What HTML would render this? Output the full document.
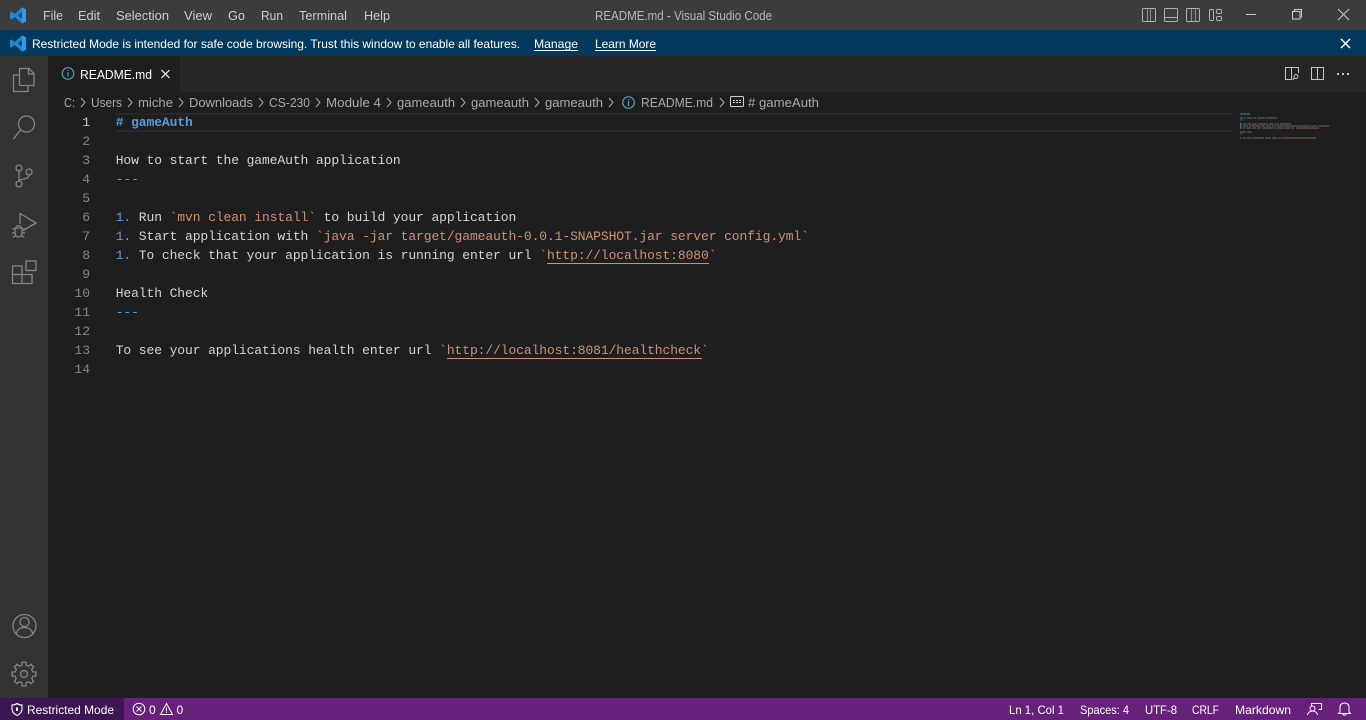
<!DOCTYPE html>
<html><head><meta charset="utf-8"><title>README.md - Visual Studio Code</title>
<style>
html,body{margin:0;padding:0;width:1366px;height:720px;overflow:hidden;background:#1e1e1e}
svg{display:block}
text{font-family:"Liberation Sans",sans-serif;font-size:13px;white-space:pre}
.m{fill:#cccccc}
.c{font-family:"Liberation Mono",monospace;font-size:13px;letter-spacing:-0.1px;fill:#d4d4d4}
.b{fill:#569cd6}.l{fill:#6796e6}.o{fill:#ce9178}
.n{font-family:"Liberation Mono",monospace;font-size:13px;fill:#858585;text-anchor:end}
.bc{fill:#a9a9a9}
.s{fill:#fff;font-size:12px}
.ic{fill:none;stroke:#858585;stroke-width:1.3}
.chev{fill:none;stroke:#a9a9a9;stroke-width:1}
.mm{fill:none;stroke-width:1.3;stroke:#5a5a5a}
.mo{fill:none;stroke-width:1.3;stroke:#6e5045}
</style></head><body>
<svg width="1366" height="720" viewBox="0 0 1366 720" xmlns="http://www.w3.org/2000/svg">
<defs>
<symbol id="logo" viewBox="0 0 100 100">
<path fill="#2387d0" fill-rule="evenodd" d="M97 14L73 2 31 41 12 26 3 31V69L12 74 31 59 73 98 97 86ZM73 30L50 50 73 70Z"/>
<path fill="#2f9bea" d="M73 2L97 14V86L73 98Z"/>
</symbol>
<g id="chv"><path class="chev" d="M0 0l4 4.500-4 4.500"/></g>
<path id="gt" d="M8.310-3.440L8.730-2.180 11.850-1.880V1.880L8.730 2.180 8.310 3.440"/>
</defs>

<rect width="1366" height="720" fill="#1e1e1e"/>
<!-- title bar -->
<rect width="1366" height="30" fill="#3c3c3c"/>
<use href="#logo" x="9.500" y="7" width="17" height="17"/>
<text class="m" x="43" y="20" textLength="20" lengthAdjust="spacingAndGlyphs">File</text>
<text class="m" x="78" y="20" textLength="22" lengthAdjust="spacingAndGlyphs">Edit</text>
<text class="m" x="116" y="20" textLength="53" lengthAdjust="spacingAndGlyphs">Selection</text>
<text class="m" x="184" y="20" textLength="28" lengthAdjust="spacingAndGlyphs">View</text>
<text class="m" x="228" y="20" textLength="17" lengthAdjust="spacingAndGlyphs">Go</text>
<text class="m" x="261" y="20" textLength="22" lengthAdjust="spacingAndGlyphs">Run</text>
<text class="m" x="299" y="20" textLength="48" lengthAdjust="spacingAndGlyphs">Terminal</text>
<text class="m" x="364" y="20" textLength="26" lengthAdjust="spacingAndGlyphs">Help</text>
<text x="595" y="20" fill="#b8b8b8" textLength="177" lengthAdjust="spacingAndGlyphs">README.md - Visual Studio Code</text>

<g fill="none" stroke="#b0b0b0">
<rect x="1142.500" y="8.500" width="13" height="13" rx="1"/><path d="M1147.500 8.500v13M1150.500 8.500v13" opacity=".7"/>
<rect x="1164.500" y="8.500" width="13" height="13" rx="1"/><path d="M1164.500 17.500h13"/>
<rect x="1186.500" y="8.500" width="13" height="13" rx="1"/><path d="M1191.500 8.500v13M1195.500 8.500v13" opacity=".7"/>
<rect x="1209.500" y="9.500" width="4" height="11" rx="1"/><rect x="1216.500" y="9.500" width="5" height="4" rx="1"/><rect x="1216.500" y="16.500" width="5" height="4" rx="1"/>
</g>
<path d="M1246 14.500h10" stroke="#cccccc" fill="none"/>
<path d="M1292.500 11.500h7.500v7.500h-7.500zM1294.500 11.500v-2h7v7.500h-2" stroke="#cccccc" fill="none"/>
<path d="M1338 9l11 11M1349 9l-11 11" stroke="#cccccc" fill="none"/>

<!-- banner -->
<rect y="30" width="1366" height="26" fill="#04395e"/>
<use href="#logo" x="9.500" y="35" width="17" height="17"/>
<text x="32" y="48" fill="#fff" style="font-size:12px" textLength="488" lengthAdjust="spacingAndGlyphs">Restricted Mode is intended for safe code browsing. Trust this window to enable all features.</text>
<text x="534" y="48" fill="#fff" style="font-size:12px" textLength="44" lengthAdjust="spacingAndGlyphs">Manage</text>
<rect x="534" y="50" width="44" height="1" fill="#fff"/>
<text x="595" y="48" fill="#fff" style="font-size:12px" textLength="61" lengthAdjust="spacingAndGlyphs">Learn More</text>
<rect x="595" y="50" width="61" height="1" fill="#fff"/>
<path d="M1341 39l9 9M1350 39l-9 9" stroke="#fff" stroke-width="1.500" fill="none"/>

<!-- activity bar -->
<rect y="56" width="48" height="642" fill="#333333"/>
<g class="ic">
<path d="M19.500 68.500h9.500l5 5v12h-14.500zM28.500 68.500v5.500h5.500"/>
<path d="M19.500 75h-6v16.500h14.500v-6"/>
<circle cx="26.500" cy="124" r="8"/><path d="M20.500 130L13.500 139"/>
<circle cx="19" cy="168" r="3"/><circle cx="19" cy="184" r="3"/><circle cx="29" cy="172" r="3"/>
<path d="M19 171v10M29 175c0 4-6 4-10 5"/>
<path d="M20 224v-10.500l16 9.500-13 7.500"/>
<path d="M15 228h7v4c0 3-1.300 5-3.500 5s-3.500-2-3.500-5zM16 228c0-3 5-3 5 0M15 230l-2.500-1.500M22 230l2.500-1.500M15 233h-3M22 233h3M15.500 235.500l-2.500 2M21.500 235.500l2.500 2"/>
<path d="M12.500 266h9.500v17.500h-9.500zM12.500 274.500h19.500v9h-10"/>
<rect x="26" y="261" width="10" height="9.500"/>
<circle cx="24.500" cy="626" r="11.500"/><circle cx="24.500" cy="622" r="4.500"/><path d="M16 634.500c1-4.500 4-7 8.500-7s7.500 2.500 8.500 7"/>
<circle cx="24" cy="674" r="3.500"/>
<g transform="translate(24 674)">
<use href="#gt"/><use href="#gt" transform="rotate(45)"/><use href="#gt" transform="rotate(90)"/><use href="#gt" transform="rotate(135)"/><use href="#gt" transform="rotate(180)"/><use href="#gt" transform="rotate(225)"/><use href="#gt" transform="rotate(270)"/><use href="#gt" transform="rotate(315)"/>
</g>
</g>

<!-- tab bar -->
<rect x="48" y="56" width="1318" height="36" fill="#252526"/>
<rect x="48" y="56" width="132" height="36" fill="#1e1e1e"/>
<circle cx="68" cy="73.500" r="5.800" fill="none" stroke="#519aba" stroke-width="1.200"/>
<path d="M68 72v4.500M68 70v1" stroke="#519aba" stroke-width="1.200" fill="none"/>
<text x="80" y="79" fill="#ffffff" textLength="72" lengthAdjust="spacingAndGlyphs">README.md</text>
<path d="M161.500 70l8 8M169.500 70l-8 8" stroke="#e0e0e0" stroke-width="1.300" fill="none"/>
<g fill="none" stroke="#c5c5c5">
<path d="M1298.500 73v-5.500h-13v12h6M1291.500 67.500v12"/><circle cx="1296" cy="76.500" r="2"/><path d="M1294.500 78l-2 2"/>
<rect x="1311.500" y="67.500" width="12" height="12"/><path d="M1317.500 67.500v12"/>
</g>
<g fill="#c5c5c5"><rect x="1337" y="73" width="2" height="2"/><rect x="1342" y="73" width="2" height="2"/><rect x="1347" y="73" width="2" height="2"/></g>

<!-- breadcrumbs -->
<rect x="48" y="92" width="1318" height="21" fill="#1e1e1e"/>
<text class="bc" x="64" y="107" textLength="11" lengthAdjust="spacingAndGlyphs">C:</text>
<text class="bc" x="91" y="107" textLength="31" lengthAdjust="spacingAndGlyphs">Users</text>
<text class="bc" x="138" y="107" textLength="35" lengthAdjust="spacingAndGlyphs">miche</text>
<text class="bc" x="189" y="107" textLength="64" lengthAdjust="spacingAndGlyphs">Downloads</text>
<text class="bc" x="269" y="107" textLength="41" lengthAdjust="spacingAndGlyphs">CS-230</text>
<text class="bc" x="326" y="107" textLength="55" lengthAdjust="spacingAndGlyphs">Module 4</text>
<text class="bc" x="397" y="107" textLength="58" lengthAdjust="spacingAndGlyphs">gameauth</text>
<text class="bc" x="471" y="107" textLength="58" lengthAdjust="spacingAndGlyphs">gameauth</text>
<text class="bc" x="545" y="107" textLength="58" lengthAdjust="spacingAndGlyphs">gameauth</text>
<text class="bc" x="641" y="107" textLength="72" lengthAdjust="spacingAndGlyphs">README.md</text>
<text class="bc" x="748" y="107" textLength="71" lengthAdjust="spacingAndGlyphs"># gameAuth</text>
<use href="#chv" x="81" y="98"/><use href="#chv" x="128" y="98"/><use href="#chv" x="179" y="98"/><use href="#chv" x="259" y="98"/><use href="#chv" x="316" y="98"/><use href="#chv" x="387" y="98"/><use href="#chv" x="461" y="98"/><use href="#chv" x="535" y="98"/><use href="#chv" x="609" y="98"/><use href="#chv" x="720" y="98"/>
<circle cx="628.500" cy="102.500" r="5.800" fill="none" stroke="#519aba" stroke-width="1.200"/>
<path d="M628.500 101v5M628.500 99v1" stroke="#519aba" stroke-width="1.200" fill="none"/>
<rect x="730.500" y="96.500" width="13" height="10" fill="none" stroke="#cccccc" rx="1"/>
<path d="M733 102.500h8M733 100.500h8" stroke="#cccccc" stroke-dasharray="2 1" fill="none"/>

<!-- current line -->
<rect x="116" y="113" width="1116" height="2" fill="#282828"/>
<rect x="116" y="130" width="1116" height="2" fill="#282828"/>

<!-- line numbers -->
<text class="n" x="90" y="126" style="fill:#c6c6c6">1</text>
<text class="n" x="90" y="145">2</text>
<text class="n" x="90" y="164">3</text>
<text class="n" x="90" y="183">4</text>
<text class="n" x="90" y="202">5</text>
<text class="n" x="90" y="221">6</text>
<text class="n" x="90" y="240">7</text>
<text class="n" x="90" y="259">8</text>
<text class="n" x="90" y="278">9</text>
<text class="n" x="90" y="297">10</text>
<text class="n" x="90" y="316">11</text>
<text class="n" x="90" y="335">12</text>
<text class="n" x="90" y="354">13</text>
<text class="n" x="90" y="373">14</text>

<!-- code -->
<text class="c b" x="115.700" y="126" style="font-weight:bold"># gameAuth</text>
<text class="c" x="115.700" y="164">How to start the gameAuth application</text>
<text class="c b" x="115.700" y="183">---</text>
<text class="c" x="115.700" y="221"><tspan class="l">1.</tspan> Run <tspan class="o">`mvn clean install`</tspan> to build your application</text>
<text class="c" x="115.700" y="240"><tspan class="l">1.</tspan> Start application with <tspan class="o">`java -jar target/gameauth-0.0.1-SNAPSHOT.jar server config.yml`</tspan></text>
<text class="c" x="115.700" y="259"><tspan class="l">1.</tspan> To check that your application is running enter url <tspan class="o">`http://localhost:8080`</tspan></text>
<rect x="547" y="263" width="162" height="1" fill="#ce9178"/>
<text class="c" x="115.700" y="297">Health Check</text>
<text class="c b" x="115.700" y="316">---</text>
<text class="c" x="115.700" y="354">To see your applications health enter url <tspan class="o">`http://localhost:8081/healthcheck`</tspan></text>
<rect x="447" y="358" width="255" height="1" fill="#ce9178"/>

<!-- minimap -->
<path d="M1240 114h10" fill="none" stroke="#3f6a90" stroke-width="1.300"/>
<path class="mm" d="M1240 118h3m1 0h2m1 0h5m1 0h3m1 0h8m1 0h11"/>
<path d="M1240 120h3M1240 134h3" fill="none" stroke="#34506a"/>
<rect x="1240" y="123" width="1.500" height="6" fill="#3f6a90"/>
<path class="mm" d="M1243 124h3m20 0h2m1 0h5m1 0h4m1 0h11"/>
<path class="mo" d="M1247 124h4m1 0h5m1 0h8"/>
<path class="mm" d="M1243 126h5m1 0h11m1 0h4"/>
<path class="mo" d="M1266 126h5m1 0h4m1 0h33m1 0h6m1 0h11"/>
<path class="mm" d="M1243 128h2m1 0h5m1 0h4m1 0h4m1 0h11m1 0h2m1 0h7m1 0h5m1 0h3"/>
<path class="mo" d="M1296 128h23"/>
<path class="mm" d="M1240 132h6m1 0h5"/>
<path class="mm" d="M1240 138h2m1 0h3m1 0h4m1 0h12m1 0h6m1 0h5m1 0h3"/>
<path class="mo" d="M1282 138h34"/>

<!-- status bar -->
<rect y="698" width="1366" height="22" fill="#68217a"/>
<rect y="698" width="124" height="22" fill="#3b1650"/>
<path d="M17 703.500c1.800 1.300 3.300 1.500 5 1.500v4c0 3-2 5-5 6.500-3-1.500-5-3.500-5-6.500v-4c1.700 0 3.200-.2 5-1.500z" fill="none" stroke="#fff" stroke-width="1.100"/>
<path d="M17 707.500v3.500" stroke="#fff" stroke-width="2" fill="none"/>
<text class="s" x="27" y="714" textLength="87" lengthAdjust="spacingAndGlyphs">Restricted Mode</text>
<circle cx="139" cy="709" r="5.800" fill="none" stroke="#fff"/><path d="M136.500 706.500l5 5M141.500 706.500l-5 5" stroke="#fff" fill="none"/>
<text class="s" x="149" y="714">0</text>
<path d="M166.500 703.500l6 11h-12z" fill="none" stroke="#fff"/><path d="M166.500 707.500v4M166.500 712v1" stroke="#fff" fill="none"/>
<text class="s" x="176.500" y="714">0</text>
<text class="s" x="1009" y="714" textLength="55" lengthAdjust="spacingAndGlyphs">Ln 1, Col 1</text>
<text class="s" x="1080" y="714" textLength="49" lengthAdjust="spacingAndGlyphs">Spaces: 4</text>
<text class="s" x="1145" y="714" textLength="32" lengthAdjust="spacingAndGlyphs">UTF-8</text>
<text class="s" x="1192" y="714" textLength="27" lengthAdjust="spacingAndGlyphs">CRLF</text>
<text class="s" x="1235" y="714" textLength="56" lengthAdjust="spacingAndGlyphs">Markdown</text>
<g fill="none" stroke="#fff">
<path d="M1311.500 707v-3.500h10v6h-3"/><circle cx="1312.500" cy="708.500" r="2.500"/><path d="M1307.500 715c.5-2.500 2.500-4 5-4s4.500 1.500 5 4"/>
<path d="M1340 712v-5c0-2.500 2-4 4.500-4s4.500 1.500 4.500 4v5l1.500 1.500h-12zM1343 714c0 1.500 3 1.500 3 0"/>
</g>
</svg>
</body></html>
